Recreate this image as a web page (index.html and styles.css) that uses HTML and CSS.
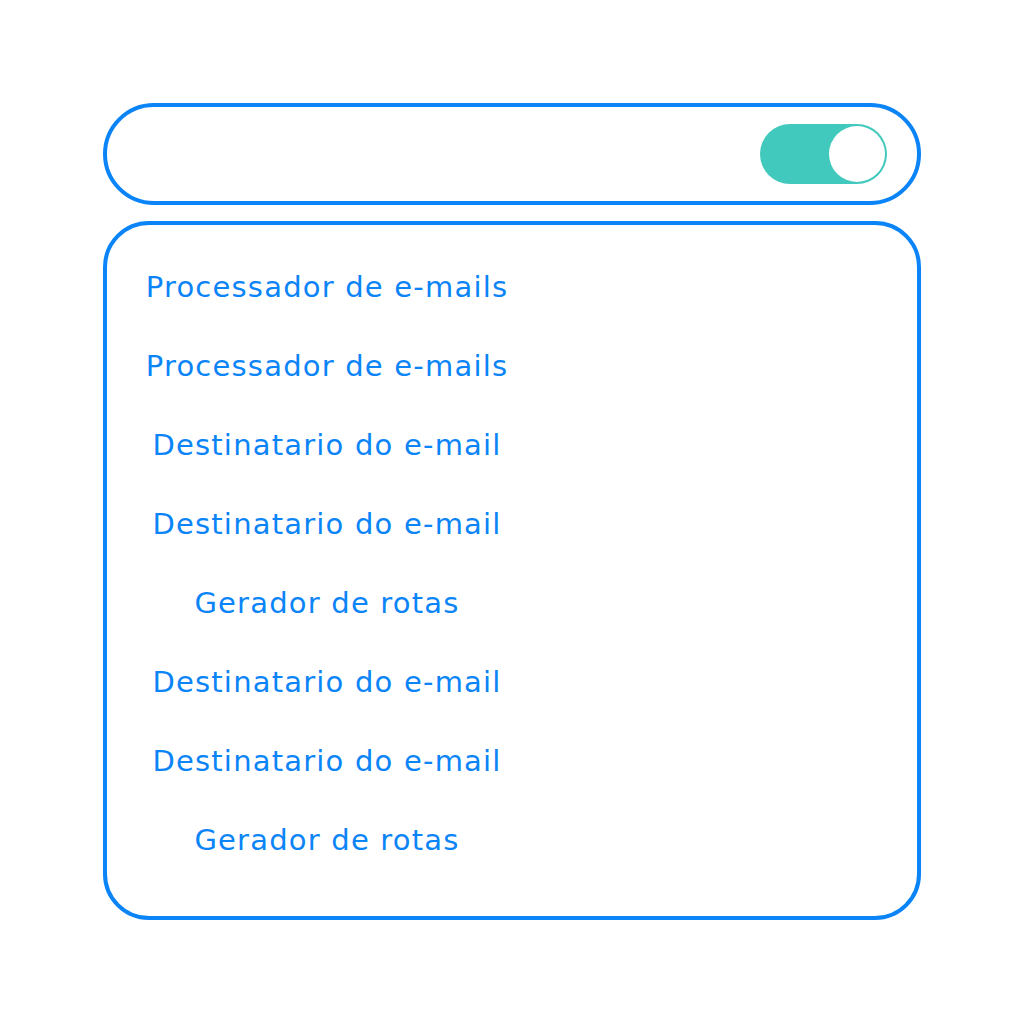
FILE: index.html
```html
<!DOCTYPE html>
<html lang="pt">
<head>
  <meta charset="UTF-8" />
  <title>Fluxo de e-mails</title>
  <link rel="stylesheet" href="styles.css">
</head>
<body>
  <div class="page">
    <div class="header-bar">
      <div class="toggle on">
        <span class="knob"></span>
      </div>
    </div>

    <div class="panel">
      <ul class="steps">
        <li>Processador de e-mails</li>
        <li>Processador de e-mails</li>
        <li>Destinatario do e-mail</li>
        <li>Destinatario do e-mail</li>
        <li>Gerador de rotas</li>
        <li>Destinatario do e-mail</li>
        <li>Destinatario do e-mail</li>
        <li>Gerador de rotas</li>
      </ul>
    </div>
  </div>
</body>
</html>
```

FILE: styles.css
```css
body {
  margin: 0;
  background: #ffffff;
  font-family: "DejaVu Sans", Arial, sans-serif;
}

.page {
  width: 818px;
  padding: 103px 0 0 103px;
  display: flex;
  flex-direction: column;
  gap: 16px;
}

.header-bar {
  box-sizing: border-box;
  height: 102px;
  border: 4px solid #0a84f7;
  border-radius: 51px;
  display: flex;
  align-items: center;
  justify-content: flex-end;
  padding-right: 30px;
}

.toggle {
  box-sizing: border-box;
  width: 127px;
  height: 60px;
  border-radius: 30px;
  background: #42c9bd;
  display: flex;
  align-items: center;
  justify-content: flex-end;
  padding: 2px;
}

.knob {
  box-sizing: border-box;
  width: 56px;
  height: 56px;
  border-radius: 50%;
  background: #ffffff;
}

.panel {
  box-sizing: border-box;
  height: 699px;
  border: 4px solid #0a84f7;
  border-radius: 46px;
  padding: 23px 0 0 37px;
}

.steps {
  list-style: none;
  margin: 0;
  padding: 0;
  width: 366px;
  display: flex;
  flex-direction: column;
  align-items: center;
}

.steps li {
  height: 79px;
  line-height: 79px;
  font-size: 29px;
  letter-spacing: 1.2px;
  color: #0a84f7;
}
```
